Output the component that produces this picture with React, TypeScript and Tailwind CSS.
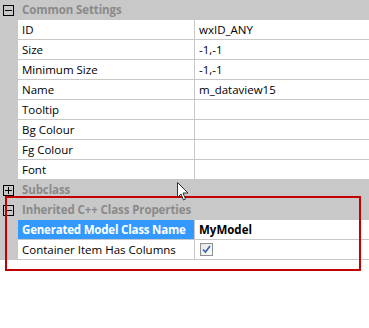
import React from "react";

const Box = ({ plus }: { plus?: boolean }) => (
  <div className="relative w-[11px] h-[11px] border border-black bg-transparent shrink-0">
    <div className="absolute left-[1px] top-[4px] w-[7px] h-[1px] bg-black" />
    {plus && <div className="absolute left-[4px] top-[1px] w-[1px] h-[7px] bg-black" />}
  </div>
);

const Header = ({ title, plus }: { title: string; plus?: boolean }) => (
  <div className="h-5 bg-[#c8c8c8] flex items-center pl-[3px]">
    <Box plus={plus} />
    <span className="ml-[8px] font-bold text-[#8a8a8a] whitespace-nowrap text-[11.5px] tracking-[-0.1px]">{title}</span>
  </div>
);

const Row = ({
  name,
  value,
  selected,
  children,
}: {
  name: string;
  value?: string;
  selected?: boolean;
  children?: React.ReactNode;
}) => (
  <div className="h-5 flex">
    <div className="w-[18px] bg-[#c8c8c8] shrink-0" />
    <div
      className={
        selected
          ? "w-[177px] shrink-0 bg-[#3399ff] text-white font-bold pl-[4px] flex items-center border-b border-r border-[#c8c8c8] whitespace-nowrap overflow-hidden tracking-[-0.2px]"
          : "w-[177px] shrink-0 bg-white text-black pl-[4px] flex items-center border-b border-r border-[#c8c8c8] whitespace-nowrap overflow-hidden"
      }
    >
      {name}
    </div>
    <div
      className={
        selected
          ? "flex-1 bg-white pl-[4px] flex items-center border-b border-[#c8c8c8] font-bold text-black whitespace-nowrap"
          : "flex-1 bg-white pl-[4px] flex items-center border-b border-[#c8c8c8] text-black whitespace-nowrap"
      }
    >
      {value}
      {children}
    </div>
  </div>
);

export default function App() {
  return (
    <div
      className="relative w-[369px] h-[328px] bg-white overflow-hidden text-[11.5px] leading-none"
      style={{ fontFamily: '"Open Sans", "Noto Sans", sans-serif' }}
    >
      <div className="flex flex-col">
        <Header title="Common Settings" />
        <Row name="ID" value="wxID_ANY" />
        <Row name="Size" value="-1,-1" />
        <Row name="Minimum Size" value="-1,-1" />
        <Row name="Name" value="m_dataview15" />
        <Row name="Tooltip" />
        <Row name="Bg Colour" />
        <Row name="Fg Colour" />
        <Row name="Font" />
        <Header title="Subclass" plus />
        <Header title="Inherited C++ Class Properties" />
        <Row name="Generated Model Class Name" value="MyModel" selected />
        <Row name="Container Item Has Columns">
          <div className="relative w-[13px] h-[13px] border border-[#8e8f8f] bg-gradient-to-br from-[#e6e6e6] to-[#fafafa] ml-[1px]">
            <svg className="absolute left-[1px] top-[1px]" width="9" height="9" viewBox="0 0 9 9">
              <path d="M1 4.5 L3.5 7 L8 1" stroke="#3c5fa8" strokeWidth="1.6" fill="none" />
            </svg>
          </div>
        </Row>
      </div>

      <div className="absolute left-[5px] top-[196px] w-[356px] h-[75px] border-2 border-[#c40000]" />

      <svg className="absolute left-[177px] top-[182px]" width="13" height="20" viewBox="0 0 13 20">
        <path
          d="M0.5 0.5 L0.5 15.5 L4 12 L6.5 18 L8.5 17 L6 11 L11 11 Z"
          fill="white"
          stroke="#333"
          strokeWidth="1"
        />
      </svg>
    </div>
  );
}
